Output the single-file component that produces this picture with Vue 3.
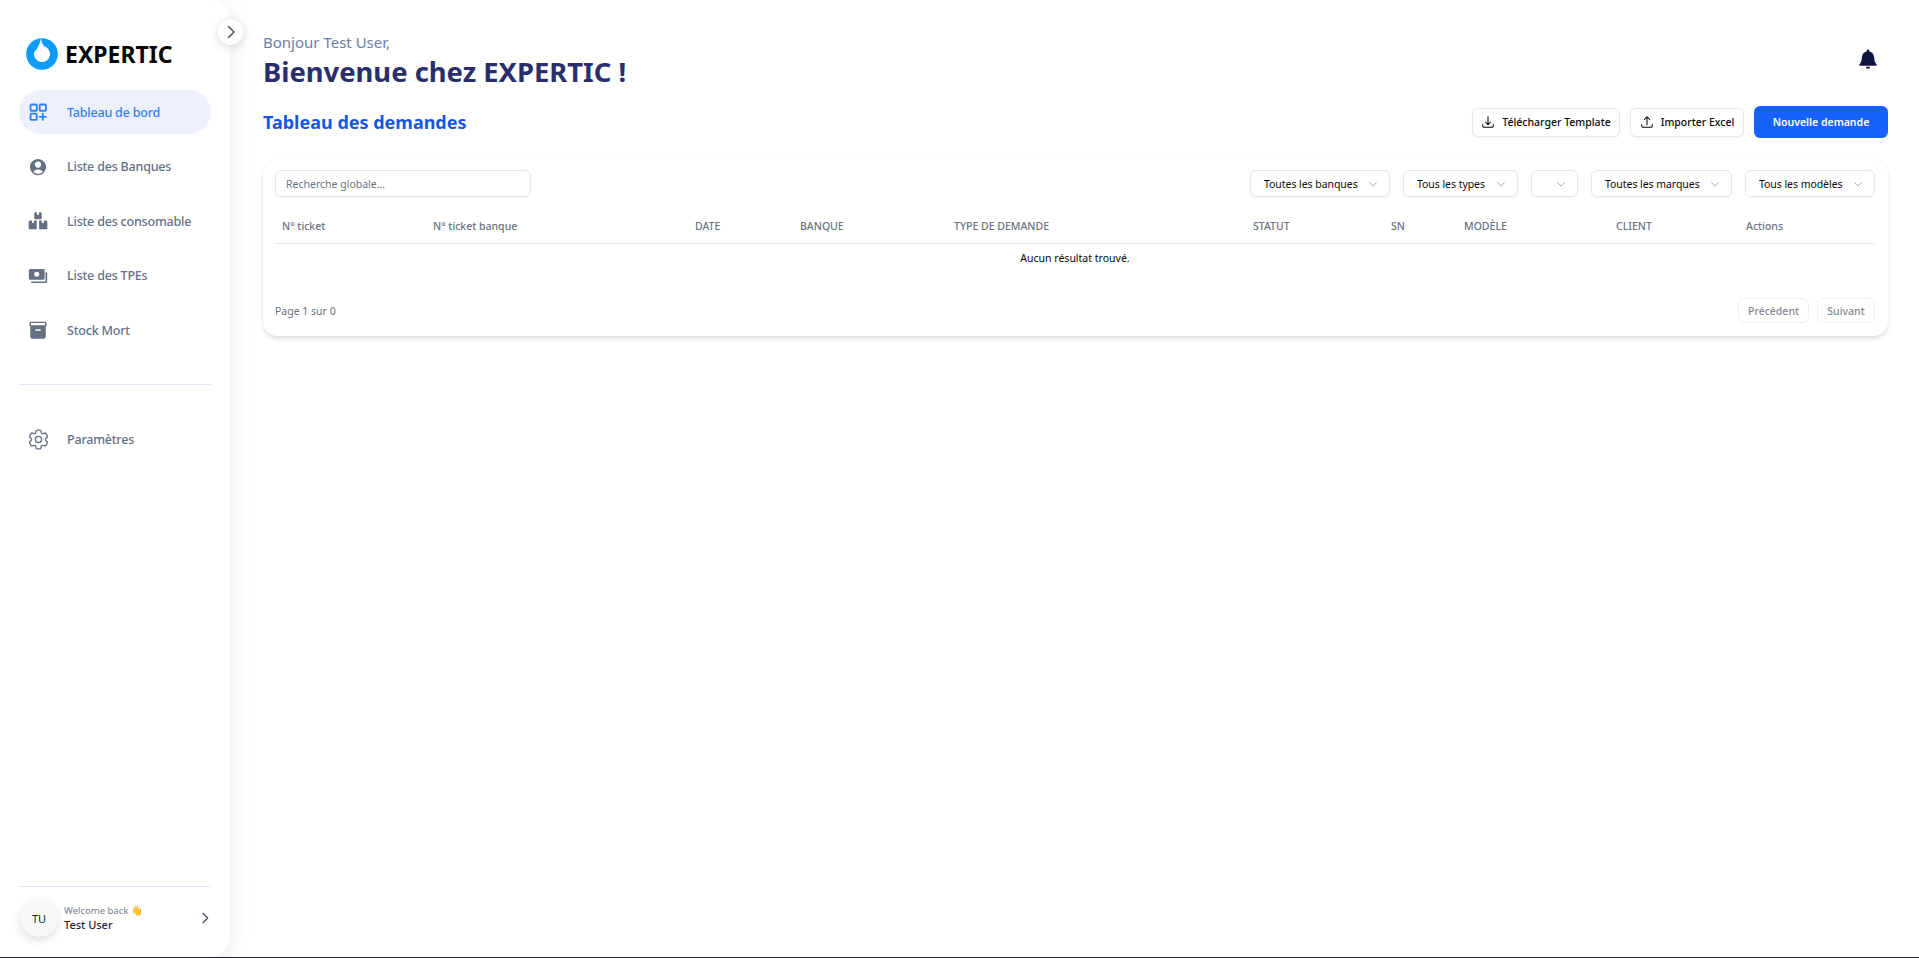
<script setup>
const filters = [
  { label: 'Toutes les banques', cls: 'f-banques' },
  { label: 'Tous les types', cls: 'f-types' },
  { label: '', cls: 'f-empty' },
  { label: 'Toutes les marques', cls: 'f-marques' },
  { label: 'Tous les modèles', cls: 'f-modeles' },
]
const columns = ['N° ticket', 'N° ticket banque', 'DATE', 'BANQUE', 'TYPE DE DEMANDE', 'STATUT', 'SN', 'MODÈLE', 'CLIENT', 'Actions']
</script>

<template>
  <div class="page">
    <aside class="sidebar">
      <button class="collapse" aria-label="Ouvrir">
        <svg viewBox="0 0 24 24" width="18" height="18" fill="none" stroke="#4b5563" stroke-width="2.200" stroke-linecap="round" stroke-linejoin="round"><path d="m9 5 7 7-7 7" /></svg>
      </button>
      <div class="brand">
        <svg class="logo" viewBox="0 0 32 32" width="32" height="32">
          <circle cx="16" cy="16" r="15.800" fill="#0a9bfb" />
          <path d="M15 -0.200 C15.500 3 16 6 18 8.300 A8 8 0 1 1 8.200 14.200 C11 11 14 7 15 -0.200 Z" fill="#fff" />
          <path d="M0 0 H7 C5 1.200 3 2.800 1.300 5.200 L0 5.200 Z" fill="#fff" />
        </svg>
        <span class="brand-name">EXPERTIC</span>
      </div>
      <nav class="menu">
        <a class="item active">
          <svg class="ico" viewBox="0 0 24 24" fill="none" stroke="currentColor" stroke-width="2.200" stroke-linecap="round" stroke-linejoin="round"><rect x="3" y="3" width="7.500" height="7.500" rx="1.200" /><rect x="14" y="3" width="7.500" height="7.500" rx="1.200" /><rect x="3" y="14" width="7.500" height="7.500" rx="1.200" /><path d="M14 17.800h7.500M17.800 14v7.500" /></svg>
          <span>Tableau de bord</span>
        </a>
        <a class="item">
          <svg class="ico" viewBox="0 0 24 24" fill="currentColor"><path fill-rule="evenodd" d="M18.685 19.097A9.723 9.723 0 0 0 21.75 12c0-5.385-4.365-9.75-9.75-9.75S2.25 6.615 2.25 12a9.723 9.723 0 0 0 3.065 7.097A9.716 9.716 0 0 0 12 21.75a9.716 9.716 0 0 0 6.685-2.653Zm-12.54-1.285A7.486 7.486 0 0 1 12 15a7.486 7.486 0 0 1 5.855 2.812A8.224 8.224 0 0 1 12 20.25a8.224 8.224 0 0 1-5.855-2.438ZM15.75 9a3.75 3.75 0 1 1-7.5 0 3.75 3.75 0 0 1 7.5 0Z" clip-rule="evenodd" /></svg>
          <span>Liste des Banques</span>
        </a>
        <a class="item">
          <svg class="ico" viewBox="0 0 24 24" fill="currentColor"><path fill-rule="evenodd" d="M8.500 1.500h2.200v3h2.600v-3h2.200c.6 0 1 .4 1 1v6.300c0 .6-.4 1-1 1h-7c-.6 0-1-.4-1-1V2.500c0-.6.4-1 1-1Z M2.500 11.500h2.300v3h2.400v-3h3.300v10.500h-8c-1 0-1.700-.7-1.700-1.700v-7.100c0-1 .7-1.700 1.700-1.700Z M13.300 11.500h3.300v3H19v-3h2.500c1 0 1.700.7 1.700 1.700v7.100c0 1-.7 1.700-1.700 1.700h-8.200V11.500Z" clip-rule="evenodd" /></svg>
          <span>Liste des consomable</span>
        </a>
        <a class="item">
          <svg class="ico" viewBox="0 0 24 24" fill="currentColor"><path fill-rule="evenodd" d="M2.800 3.500h15.400c1 0 1.800.8 1.800 1.800v9.400c0 1-.8 1.800-1.800 1.800H2.800c-1 0-1.800-.8-1.800-1.800V5.300c0-1 .8-1.800 1.800-1.800Zm7.700 3.500a3 3 0 1 0 0 6 3 3 0 0 0 0-6Z" clip-rule="evenodd" /><path d="M22 7.500c.6 0 1 .4 1 1v9.700c0 1.300-1 2.300-2.300 2.300H4.500a1 1 0 1 1 0-2h16c.3 0 .5-.2.5-.5V8.500c0-.6.4-1 1-1Z" /></svg>
          <span>Liste des TPEs</span>
        </a>
        <a class="item">
          <svg class="ico" viewBox="0 0 24 24" fill="currentColor"><path fill-rule="evenodd" d="M3.500 2h17c1 0 1.800.8 1.800 1.800v2.400c0 .7-.4 1.300-1 1.500v12.500c0 1.500-1.200 2.300-2.500 2.300H5.200c-1.300 0-2.500-.8-2.500-2.300V7.700c-.6-.2-1-.8-1-1.500V3.800c0-1 .8-1.800 1.800-1.800Zm0 1.700v2.600h17V3.700h-17ZM9.500 11a1 1 0 1 0 0 2h5a1 1 0 1 0 0-2h-5Z" clip-rule="evenodd" /></svg>
          <span>Stock Mort</span>
        </a>
      </nav>
      <div class="rule rule-mid"></div>
      <a class="item">
        <svg class="ico ico-gear" viewBox="0 0 24 24" fill="none" stroke="currentColor" stroke-width="1.300" stroke-linecap="round" stroke-linejoin="round"><path d="M9.594 3.94c.09-.542.56-.94 1.11-.94h2.593c.55 0 1.02.398 1.11.94l.213 1.281c.063.374.313.686.645.87.074.04.147.083.22.127.325.196.72.257 1.075.124l1.217-.456a1.125 1.125 0 0 1 1.37.49l1.296 2.247a1.125 1.125 0 0 1-.26 1.431l-1.003.827c-.293.241-.438.613-.43.992a7.723 7.723 0 0 1 0 .255c-.008.378.137.75.43.991l1.004.827c.424.35.534.955.26 1.43l-1.298 2.247a1.125 1.125 0 0 1-1.369.491l-1.217-.456c-.355-.133-.75-.072-1.076.124a6.47 6.47 0 0 1-.22.128c-.331.183-.581.495-.644.869l-.213 1.281c-.09.543-.56.94-1.11.94h-2.594c-.55 0-1.019-.398-1.11-.94l-.213-1.281c-.062-.374-.312-.686-.644-.87a6.52 6.52 0 0 1-.22-.127c-.325-.196-.72-.257-1.076-.124l-1.217.456a1.125 1.125 0 0 1-1.369-.49l-1.297-2.247a1.125 1.125 0 0 1 .26-1.431l1.004-.827c.292-.24.437-.613.43-.991a6.932 6.932 0 0 1 0-.255c.007-.38-.138-.751-.43-.992l-1.004-.827a1.125 1.125 0 0 1-.26-1.43l1.297-2.247a1.125 1.125 0 0 1 1.37-.491l1.216.456c.356.133.751.072 1.076-.124.072-.044.146-.086.22-.128.332-.183.582-.495.644-.869l.214-1.28Z" /><path d="M15 12a3 3 0 1 1-6 0 3 3 0 0 1 6 0Z" /></svg>
        <span>Paramètres</span>
      </a>
      <div class="foot">
        <div class="rule"></div>
        <div class="user">
          <div class="avatar">TU</div>
          <div class="user-text">
            <div class="welcome">Welcome back <span class="wave">👋</span></div>
            <div class="username">Test User</div>
          </div>
          <svg class="user-chev" viewBox="0 0 24 24" width="16" height="16" fill="none" stroke="#4b5563" stroke-width="2" stroke-linecap="round" stroke-linejoin="round"><path d="m9 5 7 7-7 7" /></svg>
        </div>
      </div>
    </aside>

    <main class="main">
      <header class="top">
        <div>
          <p class="hello">Bonjour Test User,</p>
          <h1 class="welcome-title">Bienvenue chez EXPERTIC !</h1>
        </div>
        <svg class="bell" viewBox="0 0 24 24" width="22" height="22" fill="#13133f"><path d="M12 1.500c-.8 0-1.400.6-1.400 1.400v.8C7.400 4.400 5.300 7 5.300 10.200c0 4-1 6-2.600 7.600-.5.600-.1 1.500.7 1.500h17.200c.8 0 1.200-.9.700-1.500-1.600-1.600-2.600-3.600-2.600-7.600 0-3.200-2.100-5.800-5.300-6.500v-.8c0-.8-.6-1.400-1.400-1.400Z" /><path d="M9.700 20.400a2.300 2.300 0 0 0 4.600 0H9.700Z" /></svg>
      </header>

      <div class="title-row">
        <h2 class="section">Tableau des demandes</h2>
        <div class="actions">
          <button class="btn btn-template">
            <svg viewBox="0 0 24 24" width="14" height="14" fill="none" stroke="currentColor" stroke-width="1.800" stroke-linecap="round" stroke-linejoin="round"><path d="M3 16.500v2.250A2.250 2.250 0 0 0 5.250 21h13.500A2.250 2.250 0 0 0 21 18.750V16.500M16.500 12 12 16.500m0 0L7.500 12m4.500 4.500V3" /></svg>
            Télécharger Template
          </button>
          <button class="btn btn-import">
            <svg viewBox="0 0 24 24" width="14" height="14" fill="none" stroke="currentColor" stroke-width="1.800" stroke-linecap="round" stroke-linejoin="round"><path d="M3 16.500v2.250A2.250 2.250 0 0 0 5.250 21h13.500A2.250 2.250 0 0 0 21 18.750V16.500m-13.500-9L12 3m0 0 4.500 4.500M12 3v13.500" /></svg>
            Importer Excel
          </button>
          <button class="btn primary">Nouvelle demande</button>
        </div>
      </div>

      <section class="card">
        <div class="filters">
          <div class="search">Recherche globale...</div>
          <div class="selects">
            <div v-for="f in filters" :key="f.cls" class="select" :class="f.cls">
              <span>{{ f.label }}</span>
              <svg viewBox="0 0 24 24" width="12" height="12" fill="none" stroke="#a8adb5" stroke-width="2" stroke-linecap="round" stroke-linejoin="round"><path d="m5 9 7 7 7-7" /></svg>
            </div>
          </div>
        </div>
        <div class="thead">
          <div v-for="c in columns" :key="c" class="th">{{ c }}</div>
        </div>
        <div class="empty">Aucun résultat trouvé.</div>
        <div class="pager">
          <span class="page-info">Page 1 sur 0</span>
          <div class="pager-btns">
            <button class="pbtn">Précédent</button>
            <button class="pbtn">Suivant</button>
          </div>
        </div>
      </section>
    </main>
  </div>
</template>

<style>
html, body { margin: 0; background: #1f2430; }
</style>

<style scoped>
* { box-sizing: border-box; }
.page {
  display: flex;
  width: 1919px;
  height: 957px;
  overflow: hidden;
  background: #fff;
  font-family: "Noto Sans", "Open Sans", sans-serif;
}
.sidebar {
  position: relative;
  flex: 0 0 230px;
  height: 957px;
  padding: 38px 19px 0;
  background: #fff;
  border-radius: 0 20px 20px 0;
  box-shadow: 0 4px 24px rgba(17, 24, 39, .09);
  display: flex;
  flex-direction: column;
}
.collapse {
  position: absolute;
  top: 19px;
  left: 218px;
  width: 25px;
  height: 26px;
  padding: 0;
  border: 0;
  border-radius: 50%;
  background: #fff;
  box-shadow: 0 2px 8px rgba(17, 24, 39, .16);
  display: flex;
  align-items: center;
  justify-content: center;
}
.brand { display: flex; align-items: center; gap: 7px; height: 32px; margin-left: 7px; }
.logo { flex: none; }
.brand-name { font-size: 23px; font-weight: 700; color: #050505; line-height: 32px; }
.menu { margin-top: 20px; display: flex; flex-direction: column; gap: 10.5px; }
.item {
  height: 44px;
  display: flex;
  align-items: center;
  padding-left: 9px;
  border-radius: 22px;
  color: #667085;
  font-size: 12.500px;
  font-weight: 500;
  letter-spacing: -.2px;
}
.item span { margin-left: 19px; }
.active { background: #edf1fd; color: #2f80ff; }
.ico { width: 20px; height: 20px; flex: none; }
.ico-gear { width: 25px; height: 25px; margin: 0 -2.5px; }
.rule { height: 1px; background: #e0e6f6; }
.rule-mid { margin: 32px 0 32px; }
.foot { margin-top: auto; }
.user { display: flex; align-items: center; height: 70px; padding: 0 3px 8px 1px; }
.avatar {
  width: 38px;
  height: 38px;
  border-radius: 50%;
  background: #f7f7f8;
  box-shadow: 0 3px 8px rgba(17, 24, 39, .14);
  display: flex;
  align-items: center;
  justify-content: center;
  font-size: 11px;
  font-weight: 400;
  color: #1b2236;
}
.user-text { margin-left: 6px; flex: 1; }
.welcome { font-size: 9.500px; line-height: 13px; color: #7b8090; }
.username { font-size: 11px; line-height: 16px; font-weight: 500; color: #1b2236; }
.user-chev { margin-right: -5px; }

.main { flex: 1; min-width: 0; padding: 32px 31px 0 33px; }
.top { display: flex; justify-content: space-between; align-items: flex-start; }
.hello { margin: 0; font-size: 15px; line-height: 20px; color: #6e7ea3; }
.welcome-title { margin: 0; font-size: 27.400px; line-height: 39px; font-weight: 700; color: #2a2f6c; }
.bell { margin: 16px 9px 0 0; }
.title-row { display: flex; justify-content: space-between; align-items: center; margin-top: 15px; height: 32px; }
.section { margin: 0; font-size: 18px; line-height: 32px; font-weight: 700; color: #1757e0; }
.actions { display: flex; align-items: center; gap: 10px; }
.btn {
  height: 29px;
  display: flex;
  align-items: center;
  justify-content: center;
  gap: 7px;
  padding: 0;
  border: 1px solid #e5e7eb;
  border-radius: 6px;
  background: #fff;
  box-shadow: 0 1px 2px rgba(0, 0, 0, .05);
  font-family: inherit;
  font-size: 10.500px;
  font-weight: 500;
  color: #0a0a0a;
}
.btn-template { width: 148px; }
.btn-import { width: 114px; }
.primary { width: 134px; height: 32px; border: 0; background: #1762ff; color: #fff; font-weight: 600; box-shadow: none; }

.card {
  margin-top: 22px;
  height: 176px;
  padding: 10px 13px 0 12px;
  background: #fff;
  border-radius: 14px;
  box-shadow: 0 3px 5px -1px rgba(17, 24, 39, .16), 0 0 2px rgba(17, 24, 39, .06);
}
.filters { display: flex; justify-content: space-between; align-items: center; height: 27px; }
.search {
  width: 256px;
  height: 27px;
  display: flex;
  align-items: center;
  padding-left: 10px;
  border: 1px solid #e5e7eb;
  border-radius: 6px;
  box-shadow: 0 1px 2px rgba(0, 0, 0, .05);
  font-size: 10.500px;
  color: #6b7280;
}
.selects { display: flex; gap: 13px; }
.select {
  height: 27px;
  display: flex;
  align-items: center;
  justify-content: space-between;
  padding: 0 10px 0 13px;
  border: 1px solid #e5e7eb;
  border-radius: 6px;
  box-shadow: 0 1px 2px rgba(0, 0, 0, .05);
  font-size: 10.500px;
  letter-spacing: -.05px;
  color: #0a0a0a;
}
.f-banques { width: 140px; }
.f-types { width: 115px; }
.f-empty { width: 47px; }
.f-marques { width: 141px; }
.f-modeles { width: 130px; }
.thead {
  display: grid;
  grid-template-columns: 151px 262px 105px 154px 299px 138px 73px 152px 130px 1fr;
  align-items: center;
  height: 47px;
  padding: 12px 0 0 7px;
  border-bottom: 1px solid #e5e7eb;
}
.th { font-size: 10.500px; font-weight: 500; color: #6b7280; }
.empty { height: 29px; padding-bottom: 2px; display: flex; align-items: center; justify-content: center; font-size: 10.500px; color: #0a0a0a; }
.pager { display: flex; justify-content: space-between; align-items: center; margin-top: 25px; }
.page-info { font-size: 10.500px; color: #6b7280; }
.pager-btns { display: flex; gap: 8px; }
.pbtn {
  height: 25px;
  padding: 0;
  border: 1px solid #eef0f3;
  border-radius: 6px;
  background: #fff;
  font-family: inherit;
  font-size: 10.500px;
  font-weight: 500;
  color: #85898f;
}
.pbtn:first-child { width: 71px; }
.pbtn:last-child { width: 58px; }
</style>
